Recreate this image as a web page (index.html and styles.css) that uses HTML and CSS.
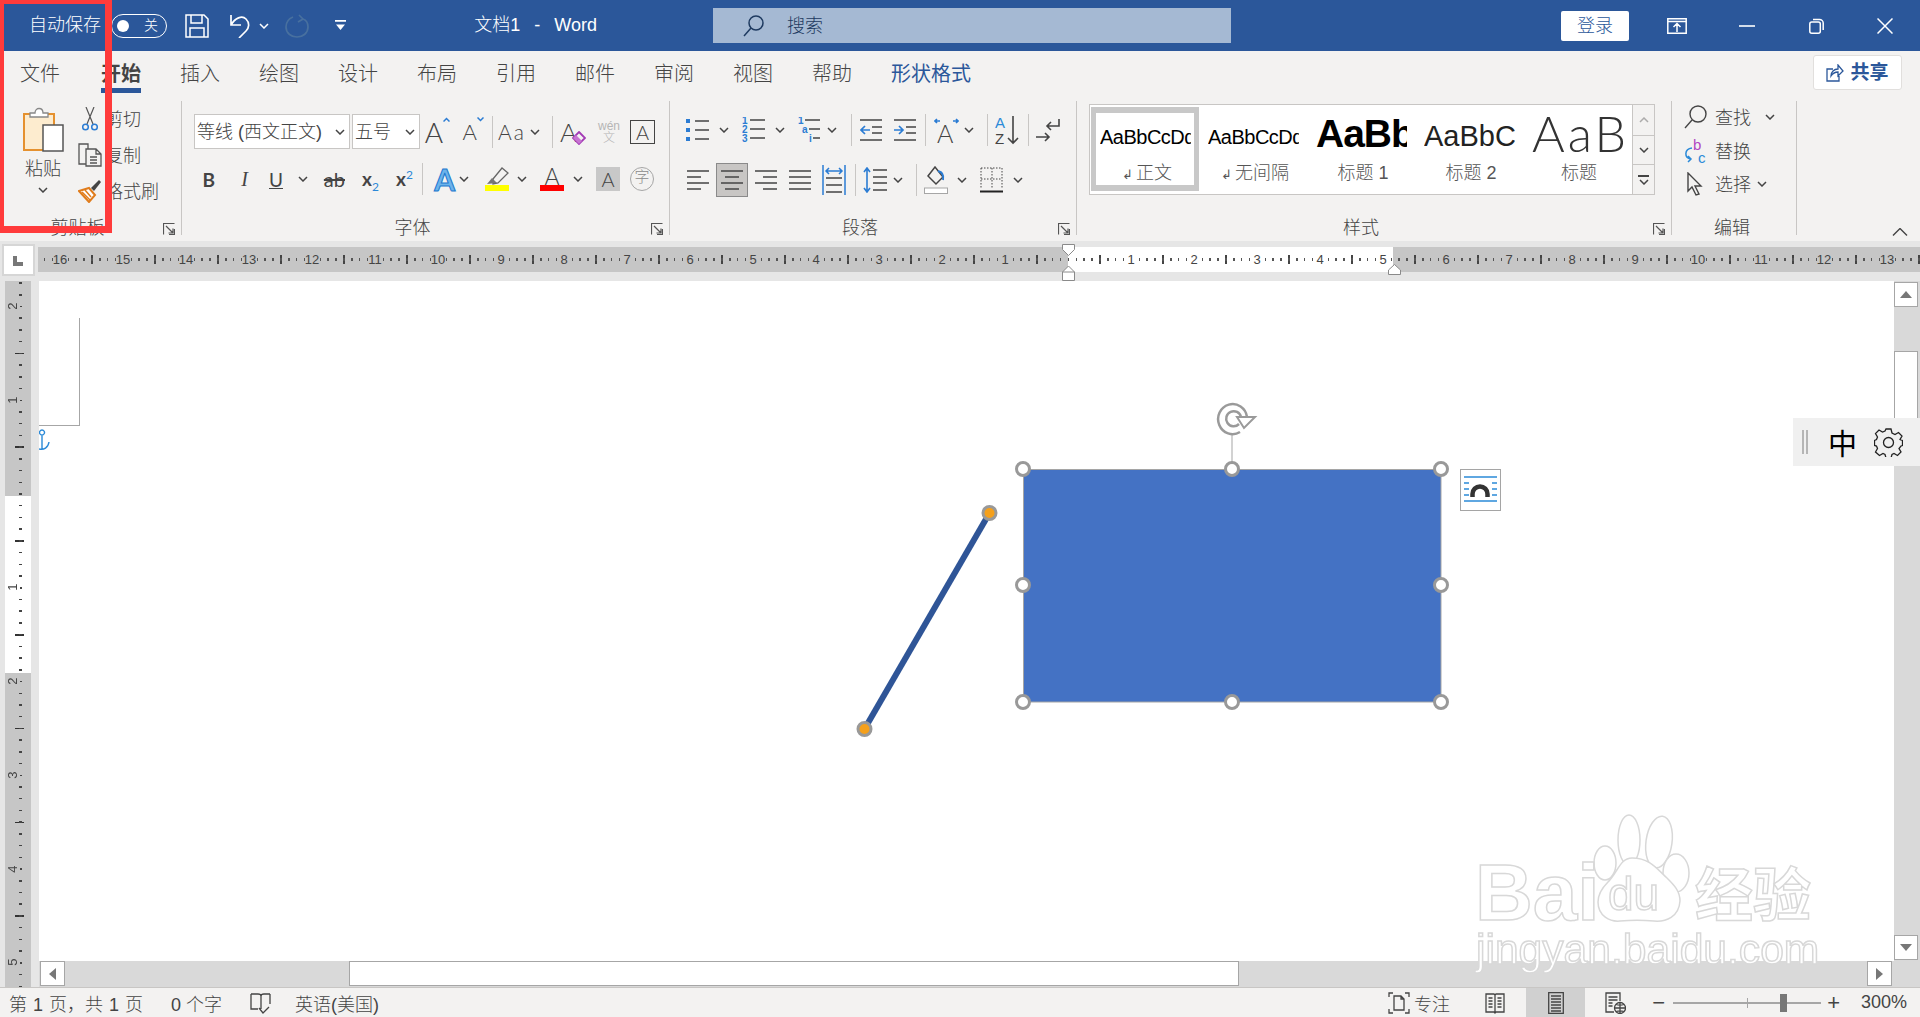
FILE: index.html
```html
<!DOCTYPE html>
<html lang="zh-CN">
  <head>
    <meta charset="UTF-8" />
    <title>文档1 - Word</title>
    <link rel="stylesheet" href="styles.css">
  </head>
  <body>
    <svg class="defs" width="0" height="0">
      <symbol id="chev" viewBox="0 0 10 6"><path d="M1 1l4 4 4-4" fill="none" stroke="#444" stroke-width="1.5"/></symbol>
      <symbol id="launch" viewBox="0 0 12 12"><path d="M.5 11.5V.5h11M3 3l7 7M10 5.5V10H5.5M11.500 6v5.500H6" fill="none" stroke="#555" stroke-width="1.200"/></symbol>
    </svg>

    <header class="titlebar">
      <span class="autosave">自动保存</span>
      <span class="toggle"><i class="knob"></i><b>关</b></span>
      <svg width="24" height="24" viewBox="0 0 24 24" fill="none" stroke="#fff" stroke-width="1.500"><path d="M1 1h18l4 4v18H1zM6 1v8h11V1M5 23v-9h14v9"/></svg>
      <svg width="21" height="24" viewBox="0 0 21 24" fill="none" stroke="#fff" stroke-width="1.700"><path d="M2 1v10h10M2 11C6 4 13 1 17 5c4 4 3 9 0 12l-7 7"/></svg>
      <svg class="chev-s" viewBox="0 0 10 6"><path d="M1 1l4 4 4-4" fill="none" stroke="#fff" stroke-width="1.500"/></svg>
      <svg width="24" height="24" viewBox="0 0 24 24" fill="none" stroke="#48709f" stroke-width="1.700"><path d="M14 1l4 4-5 3M8 3C3 5 1 9 1 13c0 6 5 10 11 10s11-4 11-10c0-4-2-7-5-8"/></svg>
      <svg width="11" height="11" viewBox="0 0 11 11" fill="#fff"><path d="M0 0h11v1.800H0zM1 4.500h9L5.500 10z"/></svg>
      <span class="doc-title">文档1&nbsp; - &nbsp;Word</span>
      <div class="search">
        <svg width="21" height="22" viewBox="0 0 21 22" fill="none" stroke="#1e3a60" stroke-width="1.500"><circle cx="13" cy="8" r="7"/><path d="M8 13L1 21"/></svg>
        <span>搜索</span>
      </div>
      <button class="login">登录</button>
      <svg width="20" height="16" viewBox="0 0 20 16" fill="none" stroke="#fff" stroke-width="1.500"><path d="M.8.800h18.400v14.400H.8zM1 3.500h18M10 14V6M6.500 9L10 5.500 13.500 9"/></svg>
      <svg width="16" height="2" viewBox="0 0 16 2"><path d="M0 1h16" stroke="#fff" stroke-width="1.600"/></svg>
      <svg width="15" height="16" viewBox="0 0 15 16" fill="none" stroke="#fff" stroke-width="1.500"><rect x=".8" y="4" width="10.500" height="11.200" rx="2"/><path d="M4 1.500h6.500c2 0 3.700 1.500 3.700 3.500v7"/></svg>
      <svg width="16" height="16" viewBox="0 0 16 16" stroke="#fff" stroke-width="1.500"><path d="M.5.500l15 15M15.500.500l-15 15"/></svg>
    </header>

    <nav class="tabs">
      <span class="tab">文件</span>
      <span class="tab active">开始</span>
      <span class="tab">插入</span>
      <span class="tab">绘图</span>
      <span class="tab">设计</span>
      <span class="tab">布局</span>
      <span class="tab">引用</span>
      <span class="tab">邮件</span>
      <span class="tab">审阅</span>
      <span class="tab">视图</span>
      <span class="tab">帮助</span>
      <span class="tab contextual">形状格式</span>
      <button class="share">
        <svg width="18" height="18" viewBox="0 0 18 18" fill="none" stroke="#2b579a" stroke-width="1.300"><path d="M7 5H1v12h12v-5M5 12c0-4 3-7 7-7V1l5 6-5 5V8c-3 0-5 1-7 4z"/></svg>
        <span>共享</span>
      </button>
    </nav>

    <section class="ribbon">
      <div class="group group-clip">
        <div class="clip-body">
          <div class="paste">
            <svg width="41" height="45" viewBox="0 0 41 45"><rect x="1" y="7" width="30" height="36" fill="#fdeccf" stroke="#e5912f" stroke-width="2"/><path d="M7 10V6h5c0-6 8-6 8 0h5v4z" fill="#fff" stroke="#888" stroke-width="1.300"/><rect x="20" y="18" width="20" height="26" fill="#fff" stroke="#555" stroke-width="1.500"/></svg>
            <span>粘贴</span>
            <svg class="chev"><use href="#chev"/></svg>
          </div>
          <div class="clip-tools">
            <div class="clip-row">
              <svg width="16" height="24" viewBox="0 0 16 24" fill="none"><path d="M4 0l7 17M12 0L5 17" stroke="#555" stroke-width="1.200"/><circle cx="3.500" cy="20" r="2.800" stroke="#2b7cd3" stroke-width="1.500"/><circle cx="12.500" cy="20" r="2.800" stroke="#2b7cd3" stroke-width="1.500"/></svg>
              <span>剪切</span>
            </div>
            <div class="clip-row">
              <svg width="24" height="24" viewBox="0 0 24 24" fill="#f3f2f1" stroke="#555" stroke-width="1.300"><path d="M1 1h9v20H1z"/><path d="M8 6h10l5 5v12H8zM18 6v5h5M12 14h7M12 17h7M12 20h7"/></svg>
              <span>复制</span>
            </div>
            <div class="clip-row">
              <svg width="24" height="24" viewBox="0 0 24 24"><path d="M1 12l10-3 6 7-6 7z" fill="#fff" stroke="#e07c1c" stroke-width="2"/><path d="M4 13l8 8M7 11l6 7" stroke="#e07c1c" stroke-width="1.500"/><path d="M13 9l8-8 2 2-7 9z" fill="#444"/></svg>
              <span>格式刷</span>
            </div>
          </div>
        </div>
        <footer class="group-label">剪贴板<svg class="launcher"><use href="#launch"/></svg></footer>
      </div>

      <div class="group group-font">
        <div class="tool-row font-row1">
          <div class="combo combo-font"><span>等线 (西文正文)</span><svg class="chev"><use href="#chev"/></svg></div>
          <div class="combo combo-size"><span>五号</span><svg class="chev"><use href="#chev"/></svg></div>
          <span class="glyph-a">A<svg width="7" height="5" viewBox="0 0 7 5"><path d="M.5 4.500l3-3 3 3" fill="none" stroke="#2b7cd3" stroke-width="1.500"/></svg></span>
          <span class="glyph-a small">A<svg width="7" height="5" viewBox="0 0 7 5"><path d="M.5.500l3 3 3-3" fill="none" stroke="#2b7cd3" stroke-width="1.500"/></svg></span>
          <i class="vsep"></i>
          <span class="glyph-case">Aa</span>
          <svg class="chev"><use href="#chev"/></svg>
          <i class="vsep"></i>
          <span class="glyph-clear">A<svg width="14" height="14" viewBox="0 0 14 14"><path d="M7 1l6 6-6 6-6-6z" fill="#f3f2f1" stroke="#a33ab5" stroke-width="1.800"/><path d="M4 4l6 6-3 3-6-6z" fill="#c774d2"/></svg></span>
          <span class="glyph-wen"><small>wén</small><small>文</small></span>
          <span class="glyph-boxed">A</span>
        </div>
        <div class="tool-row font-row2">
          <b class="fmt-b">B</b>
          <i class="fmt-i">I</i>
          <u class="fmt-u">U</u>
          <svg class="chev"><use href="#chev"/></svg>
          <span class="fmt-s">ab</span>
          <span class="fmt-x">x<sub>2</sub></span>
          <span class="fmt-x">x<sup>2</sup></span>
          <i class="vsep"></i>
          <span class="glyph-effect">A</span>
          <svg class="chev"><use href="#chev"/></svg>
          <span class="colorbar">
            <svg width="24" height="18" viewBox="0 0 24 18"><path d="M8 12l9-11 6 5-10 10-5 1z" fill="#f3f2f1" stroke="#666" stroke-width="1.300"/><path d="M2 17l5-6 5 5z" fill="#777"/></svg>
            <i class="bar-yellow"></i>
          </span>
          <svg class="chev"><use href="#chev"/></svg>
          <span class="colorbar"><span class="bar-letter">A</span><i class="bar-red"></i></span>
          <svg class="chev"><use href="#chev"/></svg>
          <span class="glyph-shade">A</span>
          <span class="glyph-circle">字</span>
        </div>
        <footer class="group-label">字体<svg class="launcher"><use href="#launch"/></svg></footer>
      </div>

      <div class="group group-para">
        <div class="tool-row para-row1">
          <svg width="23" height="24" viewBox="0 0 23 24"><path d="M0 1h4v4H0zM0 10h4v4H0zM0 19h4v4H0z" fill="#2b7cd3"/><path d="M9 3h14M9 12h14M9 21h14" stroke="#444" stroke-width="1.700"/></svg>
          <svg class="chev"><use href="#chev"/></svg>
          <svg width="23" height="26" viewBox="0 0 23 26"><g class="svg-num"><text x="0" y="7">1</text><text x="0" y="16">2</text><text x="0" y="25">3</text></g><path d="M8 3h15M8 12h15M8 21h15" stroke="#444" stroke-width="1.700"/></svg>
          <svg class="chev"><use href="#chev"/></svg>
          <svg width="22" height="26" viewBox="0 0 22 26"><g class="svg-num"><text x="0" y="7">1</text><text x="4" y="16">a</text><text x="11" y="25">i</text></g><path d="M7 3h15M11 12h11M15 21h7" stroke="#444" stroke-width="1.700"/></svg>
          <svg class="chev"><use href="#chev"/></svg>
          <i class="vsep"></i>
          <svg width="22" height="24" viewBox="0 0 22 24"><path d="M0 2h22M12 9h10M12 15h10M0 22h22" stroke="#444" stroke-width="1.700"/><path d="M10 12H1M5 8l-4 4 4 4" fill="none" stroke="#2b7cd3" stroke-width="1.700"/></svg>
          <svg width="22" height="24" viewBox="0 0 22 24"><path d="M0 2h22M12 9h10M12 15h10M0 22h22" stroke="#444" stroke-width="1.700"/><path d="M0 12h9M5 8l4 4-4 4" fill="none" stroke="#2b7cd3" stroke-width="1.700"/></svg>
          <i class="vsep"></i>
          <svg width="25" height="28" viewBox="0 0 25 28"><path d="M1 5h5M3 3L1 5l2 2M24 5h-5M22 3l2 2-2 2" fill="none" stroke="#2b7cd3" stroke-width="1.600"/><text class="svg-big" x="3" y="27">A</text></svg>
          <svg class="chev"><use href="#chev"/></svg>
          <i class="vsep"></i>
          <svg width="25" height="30" viewBox="0 0 25 30"><text class="svg-sort blue" x="0" y="13">A</text><text class="svg-sort" x="0" y="29">Z</text><path d="M18 1v27M13 23l5 5 5-5" fill="none" stroke="#444" stroke-width="1.600"/></svg>
          <i class="vsep"></i>
          <svg width="24" height="24" viewBox="0 0 24 24" fill="none" stroke="#444" stroke-width="1.600"><path d="M23 1v7H11M15 4l-4 4 4 4M0 19h12M9 15l4 4-4 4"/></svg>
        </div>
        <div class="tool-row para-row2">
          <svg class="align" width="22" height="22" viewBox="0 0 22 22"><path d="M0 2h22M0 8h14M0 14h22M0 20h14"/></svg>
          <span class="align-on"><svg class="align" width="22" height="22" viewBox="0 0 22 22"><path d="M0 2h22M4 8h14M0 14h22M4 20h14"/></svg></span>
          <svg class="align" width="22" height="22" viewBox="0 0 22 22"><path d="M0 2h22M8 8h14M0 14h22M8 20h14"/></svg>
          <svg class="align" width="22" height="22" viewBox="0 0 22 22"><path d="M0 2h22M0 8h22M0 14h22M0 20h22"/></svg>
          <svg width="24" height="30" viewBox="0 0 24 30"><path d="M1 0v30M23 0v30M4 6h16M7 3L4 6l3 3M17 3l3 3-3 3" fill="none" stroke="#2b7cd3" stroke-width="1.500"/><path d="M4 13h16M4 20h16M4 27h16" stroke="#444" stroke-width="1.700"/></svg>
          <i class="vsep tall"></i>
          <svg width="24" height="26" viewBox="0 0 24 26"><path d="M4 1v24M1 5l3-4 3 4M1 21l3 4 3-4" fill="none" stroke="#2b7cd3" stroke-width="1.600"/><path d="M10 3h14M10 10h14M10 16h14M10 23h14" stroke="#444" stroke-width="1.700"/></svg>
          <svg class="chev"><use href="#chev"/></svg>
          <i class="vsep tall"></i>
          <svg width="24" height="28" viewBox="0 0 24 28"><path d="M11 1l8 10-7 7-8-8z" fill="#f3f2f1" stroke="#444" stroke-width="1.500"/><path d="M14 5c4 1 6 4 5 9" fill="none" stroke="#2b7cd3" stroke-width="2"/><rect x=".5" y="22" width="23" height="5.500" fill="#fff" stroke="#a6a6a6"/></svg>
          <svg class="chev"><use href="#chev"/></svg>
          <svg width="23" height="26" viewBox="0 0 23 26" fill="none"><path d="M1 1h21v21M1 1v21M12 1v21M1 12h21" stroke="#444" stroke-dasharray="1.500 1.500"/><path d="M0 24.500h23" stroke="#222" stroke-width="2"/></svg>
          <svg class="chev"><use href="#chev"/></svg>
        </div>
        <footer class="group-label">段落<svg class="launcher"><use href="#launch"/></svg></footer>
      </div>

      <div class="group group-style">
        <div class="styles">
          <div class="gallery">
            <div class="style-item selected"><div class="preview pv-normal">AaBbCcDd</div><div class="style-name"><small>↲</small>正文</div></div>
            <div class="style-item"><div class="preview pv-normal">AaBbCcDd</div><div class="style-name"><small>↲</small>无间隔</div></div>
            <div class="style-item"><div class="preview pv-h1">AaBb</div><div class="style-name">标题 1</div></div>
            <div class="style-item"><div class="preview pv-h2">AaBbC</div><div class="style-name">标题 2</div></div>
            <div class="style-item"><div class="preview pv-title">AaB</div><div class="style-name">标题</div></div>
          </div>
          <div class="gallery-nav">
            <span class="nav-btn nav-up"><svg class="chev"><use href="#chev"/></svg></span>
            <span class="nav-btn nav-down"><svg class="chev"><use href="#chev"/></svg></span>
            <span class="nav-btn nav-more"><i></i><svg class="chev"><use href="#chev"/></svg></span>
          </div>
        </div>
        <footer class="group-label">样式<svg class="launcher"><use href="#launch"/></svg></footer>
      </div>

      <div class="group group-edit">
        <div class="edit-rows">
          <div class="edit-row">
            <span class="edit-icon"><svg width="23" height="24" viewBox="0 0 23 24" fill="none" stroke="#444" stroke-width="1.400"><circle cx="14" cy="9" r="8"/><path d="M8 15l-7 8"/></svg></span>
            <span class="edit-text">查找</span><svg class="chev gap-wide"><use href="#chev"/></svg>
          </div>
          <div class="edit-row">
            <span class="edit-icon"><svg width="22" height="26" viewBox="0 0 22 26" fill="none"><text class="svg-rep purple" x="9" y="12">b</text><text class="svg-rep blue" x="14" y="25">c</text><path d="M8 10c-8 1-8 10-1 11M4 18l3 3-3 3" stroke="#2b8ad8" stroke-width="1.500"/></svg></span>
            <span class="edit-text">替换</span>
          </div>
          <div class="edit-row">
            <span class="edit-icon"><svg width="16" height="24" viewBox="0 0 16 24" fill="#f3f2f1" stroke="#444" stroke-width="1.400"><path d="M1 1v18l4-4 4 8 3-1-4-8h6z"/></svg></span>
            <span class="edit-text">选择</span><svg class="chev gap-near"><use href="#chev"/></svg>
          </div>
        </div>
        <footer class="group-label">编辑</footer>
      </div>

      <svg class="collapse" width="16" height="8" viewBox="0 0 16 8"><path d="M1 7.500l7-7 7 7" fill="none" stroke="#444" stroke-width="1.400"/></svg>
    </section>

    <div class="hruler-strip">
      <div class="corner"><i></i></div>
      <div class="hruler">
        <span>16</span><span>15</span><span>14</span><span>13</span><span>12</span><span>11</span><span>10</span><span>9</span><span>8</span><span>7</span><span>6</span><span>5</span><span>4</span><span>3</span><span>2</span><span>1</span>
        <span class="blank"></span>
        <span class="on">1</span><span class="on">2</span><span class="on">3</span><span class="on">4</span><span class="on">5</span>
        <span>6</span><span>7</span><span>8</span><span>9</span><span>10</span><span>11</span><span>12</span><span>13</span>
      </div>
      <svg class="indent indent-left" width="13" height="37" viewBox="0 0 13 37" fill="#fff" stroke="#8a8a8a"><path d="M.5.500h12v5l-6 6-6-6zM.5 28l6-6 6 6v8.500H.5zM.5 28h12"/></svg>
      <svg class="indent indent-right" width="13" height="11" viewBox="0 0 13 11" fill="#fff" stroke="#8a8a8a"><path d="M.5 10.500V6l6-5.500 6 5.500v4.500z"/></svg>
    </div>

    <main class="workspace">
      <aside class="vruler">
        <div class="vruler-inner">
          <span>2</span><span>1</span><span class="blank"></span><span class="on">1</span><span>2</span><span>3</span><span>4</span><span>5</span>
        </div>
      </aside>
      <div class="doc-column">
        <div class="doc-row">
          <div class="doc">
            <i class="crop"></i>
            <svg class="canvas" width="1855" height="680" viewBox="39 281 1855 680">
              <path d="M42 430a2.500 2.500 0 1 0 .01 0M42 435v14M39 449c5 1 9-1 10-7" fill="none" stroke="#2b8ad8" stroke-width="1.400"/>
              <path d="M989.500 513L864.500 729" stroke="#2f5597" stroke-width="6"/>
              <circle class="end" cx="989.500" cy="513" r="6.500"/>
              <circle class="end" cx="864.500" cy="729" r="6.500"/>
              <rect x="1023.500" y="469.500" width="417.500" height="232.500" fill="#4472c4" stroke="#a5a5a5"/>
              <path d="M1232 434v28" stroke="#a5a5a5"/>
              <g fill="none" stroke="#9a9a9a" stroke-width="2.500">
                <path d="M1240 432a14.500 15 0 1 1 7-15"/>
                <path d="M1239 424a7.500 7.500 0 1 1 2-7"/>
                <path d="M1237 417h18l-11 11z" fill="#fff" stroke-width="2"/>
              </g>
              <g class="handle"><circle cx="1023" cy="469" r="6.500"/><circle cx="1232" cy="469" r="6.500"/><circle cx="1441" cy="469" r="6.500"/><circle cx="1023" cy="585" r="6.500"/><circle cx="1441" cy="585" r="6.500"/><circle cx="1023" cy="702" r="6.500"/><circle cx="1232" cy="702" r="6.500"/><circle cx="1441" cy="702" r="6.500"/></g>
              <rect x="1460.500" y="469.500" width="40" height="41" fill="#fff" stroke="#a5a5a5"/>
              <path d="M1464 477h33M1464 501h33" stroke="#2b8ad8" stroke-width="1.500"/>
              <path d="M1464 483h5M1492 483h5M1464 489h5M1492 489h5M1464 495h5M1492 495h5" stroke="#2b8ad8" stroke-width="1.300"/>
              <path d="M1472.500 497v-3a7.500 7.500 0 0 1 15 0v3" fill="none" stroke="#333" stroke-width="4.500"/>
            </svg>
          </div>
          <div class="vscroll">
            <span class="sb-btn sb-up"><i></i></span>
            <span class="sb-thumb"></span>
            <span class="sb-btn sb-down"><i></i></span>
          </div>
        </div>
        <div class="hscroll">
          <span class="sb-btn sb-left"><i></i></span>
          <span class="sb-hthumb"></span>
          <span class="sb-btn sb-right"><i></i></span>
        </div>
      </div>
    </main>

    <footer class="statusbar">
      <div class="status-left">
        <span class="page-count">第 1 页，共 1 页</span>
        <span>0 个字</span>
        <svg width="21" height="22" viewBox="0 0 21 22" fill="none" stroke="#444" stroke-width="1.300"><path d="M1 2h7c2 0 3 1 3 2v13M20 2h-6c-2 0-3 1-3 2M1 2v15h7M20 2v10M9 16l4 5 6-6"/></svg>
        <span>英语(美国)</span>
      </div>
      <div class="status-right">
        <svg width="22" height="22" viewBox="0 0 22 22" fill="none" stroke="#444" stroke-width="1.300"><path d="M1 5V1h4M17 1h4v4M1 17v4h4M17 21h4v-4M6 4h7l3 3v11H6zM13 4v3h3"/></svg>
        <span>专注</span>
        <svg width="20" height="22" viewBox="0 0 20 22" fill="none" stroke="#444" stroke-width="1.300"><path d="M1 2h8l1 1 1-1h8v18h-8l-1 1-1-1H1zM10 3v17M3.500 6h4M3.500 9h4M3.500 12h4M3.500 15h4M12.500 6h4M12.500 9h4M12.500 12h4M12.500 15h4"/></svg>
        <span class="view-on"><svg width="16" height="22" viewBox="0 0 16 22" fill="none" stroke="#444" stroke-width="1.300"><path d="M.7.700h14.600v20.600H.7zM3 4h10M3 7h10M3 10h10M3 13h10M3 16h10M3 19h10"/></svg></span>
        <svg width="21" height="22" viewBox="0 0 21 22" fill="none" stroke="#444" stroke-width="1.300"><path d="M9 20H1V1h14v8M3.500 5h9M3.500 8h9M3.500 11h4M3.500 14h4"/><circle cx="15" cy="16" r="5.500"/><path d="M9.500 16h11M15 10.500v11M11 12.500c3 1 5 1 8 0M11 19.500c3-1 5-1 8 0"/></svg>
        <span class="zoom-sign">−</span>
        <span class="slider"><i class="slider-mid"></i><i class="slider-thumb"></i></span>
        <span class="zoom-sign">+</span>
        <span class="zoom-pct">300%</span>
      </div>
    </footer>

    <!-- overlays -->
    <div class="ime">
      <i class="ime-grip"></i>
      <span class="ime-mode">中</span>
      <svg width="29" height="29" viewBox="0 0 29 29" fill="none" stroke="#222" stroke-width="1.300"><path d="M12 1h5l1 4 3 1.500 3.500-2 3.500 3.500-2 3.500L27 12l1.500 .5v5l-1.500 .5-2 2.500 2 3.500-3.500 3.500-3.500-2-2 1-1 3.500h-5l-1-3.500-2-1-3.500 2L1.500 24l2-3.500-1-2.500-2-.5v-5l2-1 1-2.500-2-3.500L5 2l3.500 2 2.500-1z"/><circle cx="14.500" cy="14.500" r="5"/></svg>
    </div>
    <i class="red-frame"></i>
    <svg class="watermark" width="360" height="170" viewBox="1465 810 360 170">
      <filter id="soft"><feGaussianBlur stdDeviation=".6"/></filter>
      <g filter="url(#soft)" fill="#fff" stroke="#d8d8d8" stroke-width="1.500">
        <ellipse cx="1605" cy="863" rx="11" ry="17"/>
        <ellipse cx="1629" cy="840" rx="11" ry="25"/>
        <ellipse cx="1659" cy="842" rx="13" ry="26" transform="rotate(8 1659 842)"/>
        <ellipse cx="1676" cy="873" rx="13" ry="19"/>
        <path d="M1632 858c-12 0-14 14-24 24-8 8-10 16-10 20 0 14 12 20 22 19 12-1 22-1 34 0 12 1 25-4 26-20 0-10-6-16-13-23-10-9-17-20-35-20z"/>
        <text class="wm-bai" x="1475" y="920">Bai</text>
        <text class="wm-du" x="1608" y="910">du</text>
        <text class="wm-cn" x="1695" y="916">经验</text>
        <text class="wm-url" x="1476" y="964">jingyan.baidu.com</text>
      </g>
    </svg>
  </body>
</html>
```

FILE: styles.css
```css
* {
  box-sizing: border-box;
}

body {
  margin: 0;
  width: 1920px;
  height: 1017px;
  overflow: hidden;
  position: relative;
  display: flex;
  flex-direction: column;
  background: #fff;
  font-family: "Liberation Sans", "Noto Sans CJK SC", sans-serif;
  font-size: 18px;
  font-weight: 300;
  color: #444;
}

button {
  font: inherit;
  border: 0;
}

svg {
  display: block;
  flex: none;
}

.defs {
  position: absolute;
}

.chev {
  width: 10px;
  height: 6px;
}

/* title bar: tracks end at the right edge of each item */
.titlebar {
  height: 51px;
  flex: none;
  display: grid;
  grid-template-columns: 101px 66px 42px 41px 19px 40px 37px 251px 634px 398px 58px 68px 69px 69px;
  justify-items: end;
  align-items: center;
  background: #2b579a;
  color: #fff;
}

.autosave,
.doc-title {
  padding-bottom: 5px;
}

.doc-title {
  word-spacing: 2px;
}

.chev-s {
  width: 10px;
  height: 6px;
}

.toggle {
  width: 56px;
  height: 24px;
  border: 1.5px solid #fff;
  border-radius: 12px;
  display: flex;
  align-items: center;
  justify-content: space-between;
  padding: 0 8px 0 5px;
  font-size: 14px;
}

.toggle b {
  font-weight: 300;
  padding-bottom: 4px;
}

.knob {
  width: 12px;
  height: 12px;
  border-radius: 50%;
  background: #fff;
}

.search {
  width: 518px;
  height: 35px;
  background: #a5b9d3;
  color: #1e3a60;
  display: flex;
  align-items: center;
  padding-left: 30px;
  gap: 23px;
}

.search span {
  padding-bottom: 4px;
}

.login {
  width: 68px;
  height: 30px;
  padding: 0 0 4px;
  background: #fff;
  color: #2b579a;
  border-radius: 2px;
}

/* tabs */
.tabs {
  height: 46px;
  flex: none;
  display: flex;
  align-items: center;
  gap: 39px;
  padding: 0 18px 0 20px;
  background: #f3f2f1;
  font-size: 20px;
}

.tab {
  position: relative;
  line-height: 30px;
}

.tab.active {
  font-weight: 700;
  margin-left: 2px;
}

.tab.active::after {
  content: "";
  position: absolute;
  left: 0;
  right: 0;
  top: 29px;
  height: 5px;
  background: #2b579a;
}

.tab.contextual {
  color: #2b579a;
  font-weight: 400;
}

.share {
  margin-left: auto;
  margin-bottom: 3px;
  width: 89px;
  height: 35px;
  padding: 0;
  display: flex;
  align-items: center;
  justify-content: center;
  gap: 6px;
  background: #fff;
  border: 1px solid #e1dfdd;
  border-radius: 3px;
  color: #2b579a;
  font-size: 19px;
  font-weight: 700;
}

.share span {
  padding-bottom: 4px;
}

/* ribbon */
.ribbon {
  height: 144px;
  flex: none;
  display: flex;
  position: relative;
  padding-top: 4px;
  background: #f3f2f1;
}

.group {
  height: 134px;
  position: relative;
  border-right: 1px solid #c8c6c4;
}

.group-clip { width: 182px; }
.group-font { width: 488px; padding-top: 13px; }
.group-para { width: 407px; padding-top: 12px; }
.group-style { width: 595px; padding-top: 3px; }
.group-edit { width: 125px; }

.group-label {
  position: absolute;
  left: 0;
  right: 0;
  top: 117px;
  padding-right: 26px;
  line-height: 20px;
  text-align: center;
}

.group-edit .group-label {
  padding-right: 4px;
}

.launcher {
  position: absolute;
  right: 6px;
  top: 5px;
  width: 12px;
  height: 12px;
}

.clip-body {
  display: flex;
}

.paste {
  width: 70px;
  margin-left: 8px;
  padding-top: 6px;
  display: flex;
  flex-direction: column;
  align-items: center;
}

.paste span {
  margin-top: 2px;
  line-height: 30px;
}

.paste .chev {
  margin-top: 3px;
}

.clip-row {
  height: 36px;
  display: flex;
  align-items: center;
  gap: 3px;
}

.clip-row svg {
  width: 24px;
}

.clip-row span {
  padding-bottom: 2px;
  white-space: nowrap;
}

.tool-row {
  display: grid;
  justify-items: end;
  align-items: center;
  height: 35px;
}

.font-row1 {
  grid-template-columns: 168px 70px 30px 34px 9px 33px 14px 13px 33px 34px 35px;
}

.font-row2 {
  margin-top: 13px;
  height: 34px;
  grid-template-columns: 33px 33px 35px 25px 37px 34px 34px 10px 32px 14px 40px 18px 37px 19px 37px 34px;
}

.para-row1 {
  height: 34px;
  grid-template-columns: 39px 20px 36px 20px 35px 17px 15px 30px 34px 10px 33px 15px 14px 32px 9px 31px;
}

.para-row2 {
  margin-top: 16px;
  height: 34px;
  grid-template-columns: 39px 39px 29px 34px 35px 10px 31px 16px 14px 31px 19px 36px 20px;
}

.vsep {
  width: 1px;
  height: 32px;
  background: #c8c6c4;
}

.combo {
  height: 35px;
  background: #fff;
  border: 1px solid #c8c6c4;
  display: flex;
  align-items: center;
  justify-content: space-between;
  padding: 0 4px 0 2px;
  white-space: nowrap;
}

.combo span {
  padding-bottom: 4px;
}

.combo-font { width: 156px; }
.combo-size { width: 68px; }

.glyph-a {
  display: flex;
  align-items: flex-start;
  font-size: 28px;
  line-height: 30px;
  font-family: "Lato", sans-serif;
  font-weight: 300;
}

.glyph-a.small {
  font-size: 22px;
}

.glyph-case {
  font-size: 21px;
  font-family: "Lato", sans-serif;
  font-weight: 300;
  letter-spacing: 2px;
}

.glyph-clear {
  display: flex;
  align-items: flex-end;
  font-family: "Lato", sans-serif;
  font-size: 26px;
  line-height: 26px;
}

.glyph-clear svg {
  margin-left: -5px;
}

.glyph-wen {
  display: flex;
  flex-direction: column;
  align-items: center;
  color: #b5b5b5;
}

.glyph-wen small {
  font-size: 12px;
  line-height: 12px;
}

.glyph-boxed {
  width: 25px;
  height: 24px;
  border: 1.5px solid #444;
  text-align: center;
  line-height: 22px;
  font-size: 20px;
  font-family: "Lato", sans-serif;
}

.fmt-b {
  font-size: 19px;
  font-family: "Lato", sans-serif;
  font-weight: 700;
}

.fmt-i {
  font-size: 20px;
  font-family: "Liberation Serif", serif;
  font-weight: 400;
}

.fmt-u {
  font-size: 19px;
  font-family: "Lato", sans-serif;
  font-weight: 400;
}

.fmt-s {
  font-size: 20px;
  font-family: "Lato", sans-serif;
  font-weight: 400;
  text-decoration: line-through;
}

.fmt-x {
  font-size: 19px;
  line-height: 24px;
  font-family: "Lato", sans-serif;
  font-weight: 700;
}

.fmt-x sub,
.fmt-x sup {
  font-size: 12px;
  font-weight: 400;
  color: #2b88d8;
  line-height: 0;
}

.glyph-effect {
  font-size: 30px;
  line-height: 30px;
  font-weight: 700;
  color: #6db3ea;
  -webkit-text-stroke: 1px #1b78cf;
  font-family: "Lato", sans-serif;
}

.colorbar {
  width: 24px;
  display: flex;
  flex-direction: column;
  align-items: center;
}

.bar-letter {
  font-size: 23px;
  line-height: 18px;
  font-family: "Lato", sans-serif;
}

.bar-yellow,
.bar-red {
  display: block;
  width: 24px;
  height: 6px;
}

.bar-yellow { background: #ffff00; }
.bar-red { background: #f00; }

.glyph-shade {
  width: 24px;
  height: 24px;
  background: #c8c8c8;
  text-align: center;
  font-size: 20px;
  line-height: 24px;
  font-family: "Lato", sans-serif;
}

.glyph-circle {
  width: 24px;
  height: 24px;
  border: 1.5px solid #a6a6a6;
  border-radius: 50%;
  color: #8a8a8a;
  text-align: center;
  font-size: 15px;
  line-height: 18px;
}

.svg-num text {
  font-size: 10px;
  font-weight: 700;
  fill: #2b7cd3;
}

.svg-big {
  font-family: "Lato", sans-serif;
  font-size: 25px;
  fill: #444;
}

.svg-sort {
  font-size: 15px;
  font-weight: 400;
  fill: #444;
}

.svg-sort.blue,
.svg-rep.blue {
  fill: #2b8ad8;
}

.svg-rep {
  font-size: 15px;
  stroke: none;
}

.svg-rep.purple {
  fill: #b146c2;
}

.align {
  fill: none;
  stroke: #444;
  stroke-width: 1.700;
}

.align-on {
  width: 32px;
  height: 34px;
  display: flex;
  align-items: center;
  justify-content: center;
  background: #c8c6c4;
  border: 1px solid #8a8a8a;
}

/* style gallery */
.styles {
  display: flex;
  margin-left: 12px;
}

.gallery {
  width: 543px;
  height: 91px;
  display: flex;
  padding: 2px 0 2px 1px;
  background: #fff;
  border: 1px solid #c8c6c4;
  border-right: 0;
}

.style-item {
  width: 108px;
  height: 84px;
  padding-left: 4px;
  border: 5px solid transparent;
  border-top-width: 6px;
  border-bottom-width: 6px;
}

.style-item.selected {
  border-color: #c8c8c8;
}

.preview {
  height: 48px;
  width: 91px;
  overflow: hidden;
  white-space: nowrap;
  color: #000;
  font-weight: 400;
  line-height: 48px;
}

.pv-normal {
  font-size: 20px;
  letter-spacing: -.5px;
}

.pv-h1 {
  font-size: 39px;
  font-weight: 700;
  letter-spacing: -1px;
  line-height: 42px;
}

.pv-h2 {
  font-size: 29px;
  line-height: 46px;
  color: #222;
}

.pv-title {
  font-family: "Lato", sans-serif;
  font-size: 50px;
  font-weight: 300;
  letter-spacing: 3px;
  line-height: 40px;
  color: #333;
}

.style-name {
  padding-top: 1px;
  text-align: center;
  line-height: 22px;
  color: #555;
}

.style-name small {
  font-size: 13px;
  margin-right: 3px;
}

.gallery-nav {
  width: 23px;
  display: flex;
  flex-direction: column;
}

.nav-btn {
  display: flex;
  flex-direction: column;
  align-items: center;
  justify-content: center;
  gap: 2px;
  border: 1px solid #c8c6c4;
  margin-top: -1px;
}

.nav-up { height: 32px; margin-top: 0; }
.nav-up .chev { transform: rotate(180deg); opacity: .4; }
.nav-down { height: 30px; }
.nav-more { height: 31px; }

.nav-more i {
  width: 11px;
  height: 2px;
  background: #444;
}

/* editing */
.edit-rows {
  margin-top: -1px;
}

.edit-row {
  height: 33px;
  display: flex;
  align-items: center;
  white-space: nowrap;
}

.edit-row + .edit-row {
  margin-top: 1px;
}

.edit-row + .edit-row + .edit-row {
  margin-top: 0;
}

.edit-text {
  padding-bottom: 2px;
}

.edit-icon {
  width: 43px;
  display: flex;
  justify-content: center;
  padding-left: 3px;
}

.gap-wide { margin-left: 14px; }
.gap-near { margin-left: 6px; }

.collapse {
  position: absolute;
  right: 12px;
  top: 131px;
}

/* rulers */
.hruler-strip {
  height: 40px;
  flex: none;
  position: relative;
  background: #e6e6e6;
  display: flex;
  padding-top: 6px;
  padding-left: 38px;
  overflow: hidden;
}

.corner {
  position: absolute;
  left: 2px;
  top: 3px;
  width: 33px;
  height: 32px;
  background: #fff;
  border: 2px solid #d6d6d6;
}

.corner i {
  position: absolute;
  left: 9px;
  top: 10px;
  width: 10px;
  height: 10px;
  border-left: 4px solid #777;
  border-bottom: 4px solid #777;
}

.hruler {
  height: 25px;
  width: 1882px;
  flex: none;
  display: flex;
  font-size: 13px;
  font-weight: 400;
  line-height: 25px;
  color: #444;
  overflow: hidden;
  background-image:
    repeating-linear-gradient(90deg, transparent 0 6px, #555 6px 7.500px, transparent 7.500px 7.875px),
    repeating-linear-gradient(90deg, transparent 0 53.250px, #444 53.250px 54.750px, transparent 54.750px 63px),
    linear-gradient(90deg, #c6c6c6 0 1030px, #fff 1030px 1355px, #c6c6c6 1355px);
  background-size: 100% 3px, 100% 9px, 100% 100%;
  background-position: 0 center, 0 center, 0 0;
  background-repeat: no-repeat;
}

.hruler span {
  flex: none;
  width: 63px;
  text-align: center;
  position: relative;
  left: -9.500px;
  background: linear-gradient(#c6c6c6, #c6c6c6) center / 15px 100% no-repeat;
}

.hruler span.on {
  background-image: linear-gradient(#fff, #fff);
}

.hruler span.blank {
  background: none;
}

.indent {
  position: absolute;
}

.indent-left {
  left: 1062px;
  top: 3px;
}

.indent-right {
  left: 1388px;
  top: 23px;
}

.workspace {
  height: 706px;
  flex: none;
  display: flex;
}

.vruler {
  width: 39px;
  flex: none;
  overflow: hidden;
  font-size: 13px;
  font-weight: 400;
  color: #444;
  border-left: 5px solid #e6e6e6;
  border-right: 8px solid #e6e6e6;
  background-image:
    repeating-linear-gradient(180deg, transparent 0 1.300px, #444 1.300px 2.800px, transparent 2.800px 11.720px),
    repeating-linear-gradient(180deg, transparent 0 71.750px, #333 71.750px 73.250px, transparent 73.250px 93.750px),
    linear-gradient(180deg, #c6c6c6 0 215px, #fff 215px 392px, #c6c6c6 392px);
  background-size: 3px 100%, 9px 100%, 100% 100%;
  background-position: 14px 0, 10px 0, 0 0;
  background-repeat: no-repeat;
}

.vruler-inner {
  margin-top: -22px;
}

.vruler span {
  display: flex;
  height: 93.750px;
  align-items: center;
  justify-content: center;
  writing-mode: vertical-rl;
  transform: rotate(180deg);
  background: linear-gradient(#c6c6c6, #c6c6c6) center / 100% 13px no-repeat;
}

.vruler span.on {
  background-image: linear-gradient(#fff, #fff);
}

.vruler span.blank {
  background: none;
}

.doc-column {
  flex: 1;
  display: flex;
  flex-direction: column;
  min-width: 0;
}

.doc-row {
  height: 680px;
  display: flex;
}

.doc {
  flex: 1;
  position: relative;
  background: #fff;
}

.crop {
  position: absolute;
  left: 0;
  top: 37px;
  width: 41px;
  height: 108px;
  border-right: 1px solid #a6a6a6;
  border-bottom: 1px solid #a6a6a6;
}

.canvas {
  position: absolute;
  left: 0;
  top: 0;
}

.end {
  fill: #f5a01b;
  stroke: #999;
  stroke-width: 3;
}

.handle {
  fill: #fff;
  stroke: #999;
  stroke-width: 3;
}

/* scrollbars */
.vscroll {
  width: 26px;
  flex: none;
  background: #d9d9d9;
  display: flex;
  flex-direction: column;
  padding-top: 1px;
}

.sb-btn {
  display: flex;
  align-items: center;
  justify-content: center;
  background: #fff;
  border: 1px solid #a6a6a6;
  flex: none;
}

.sb-btn i {
  width: 0;
  height: 0;
  border: 6px solid transparent;
}

.sb-up,
.sb-down {
  width: 24px;
  height: 25px;
}

.sb-up i {
  border-top: 0;
  border-bottom: 7px solid #777;
}

.sb-down i {
  border-bottom: 0;
  border-top: 7px solid #777;
}

.sb-thumb {
  width: 24px;
  height: 100px;
  margin-top: 44px;
  background: #fff;
  border: 1px solid #a6a6a6;
}

.sb-down {
  margin-top: auto;
  margin-bottom: 1px;
}

.hscroll {
  height: 26px;
  flex: none;
  display: flex;
  background: #d9d9d9;
}

.sb-left,
.sb-right {
  width: 25px;
  height: 25px;
}

.sb-left {
  margin-left: 1px;
}

.sb-left i {
  border-left: 0;
  border-right: 7px solid #777;
}

.sb-right i {
  border-right: 0;
  border-left: 7px solid #777;
}

.sb-hthumb {
  width: 890px;
  height: 25px;
  margin-left: 284px;
  background: #fff;
  border: 1px solid #a6a6a6;
}

.sb-right {
  margin-left: auto;
  margin-right: 28px;
}

/* status bar */
.statusbar {
  height: 30px;
  flex: none;
  display: flex;
  justify-content: space-between;
  background: #f3f2f1;
  border-top: 1px solid #c8c6c4;
}

.status-left,
.status-right {
  display: grid;
  justify-items: end;
  align-items: center;
  white-space: nowrap;
}

.status-left {
  grid-template-columns: 143px 79px 49px 108px;
}

.page-count {
  word-spacing: 1px;
}

.status-right {
  grid-template-columns: 30px 40px 55px 80px 41px 39px 156px 19px 67px;
  padding-right: 13px;
}

.view-on {
  width: 59px;
  height: 29px;
  background: #d0d0d0;
  display: flex;
  align-items: center;
  justify-content: center;
}

.zoom-sign {
  font-size: 22px;
  line-height: 22px;
}

.slider {
  width: 148px;
  height: 2px;
  background: #a6a6a6;
  position: relative;
}

.slider-mid {
  position: absolute;
  left: 74px;
  top: -4px;
  width: 1px;
  height: 10px;
  background: #a6a6a6;
}

.slider-thumb {
  position: absolute;
  left: 107px;
  top: -8px;
  width: 7px;
  height: 18px;
  background: #777;
}

/* things lying over the page */
.ime {
  position: absolute;
  left: 1793px;
  top: 418px;
  width: 127px;
  height: 48px;
  background: #f0f0f0;
  display: flex;
  align-items: center;
  padding-left: 9px;
}

.ime-grip {
  width: 6px;
  height: 24px;
  border-left: 2px solid #b5b5b5;
  border-right: 2px solid #b5b5b5;
}

.ime-mode {
  margin-left: 20px;
  font-size: 29px;
  font-weight: 400;
  color: #000;
}

.ime svg {
  margin-left: 17px;
}

.red-frame {
  position: absolute;
  left: 0;
  top: 0;
  width: 112px;
  height: 233px;
  border: solid #ff3b3b;
  border-width: 4px 7px 7px 4px;
}

.watermark {
  position: absolute;
  left: 1465px;
  top: 810px;
  pointer-events: none;
}

.wm-bai {
  font-size: 80px;
  font-weight: 700;
}

.wm-du {
  font-size: 46px;
}

.wm-cn {
  font-size: 58px;
  font-weight: 700;
}

.wm-url {
  font-size: 42.600px;
}
```
